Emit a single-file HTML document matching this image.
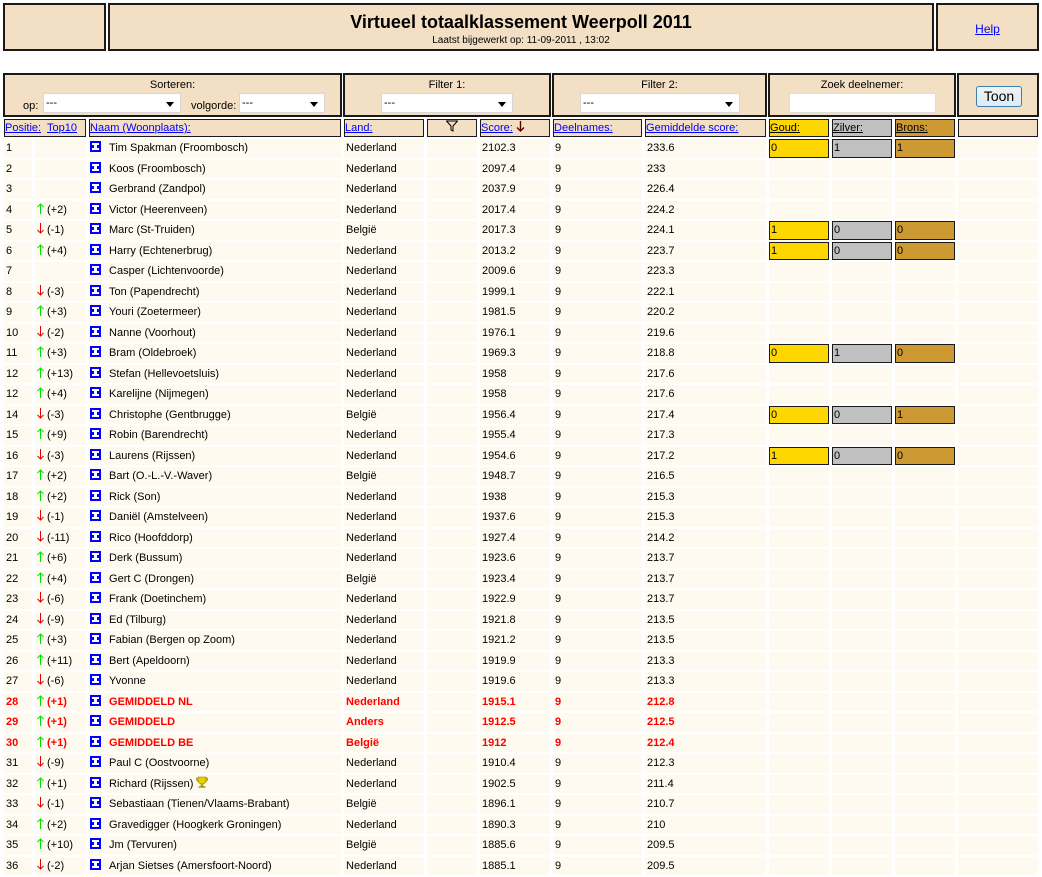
<!DOCTYPE html>
<html><head><meta charset="utf-8"><style>
body{margin:0;background:#fff;font-family:"Liberation Sans",Arial,sans-serif;font-size:11px;color:#000;width:1042px;height:876px;overflow:hidden;position:relative}
.box{position:absolute;background:#f3dfc4;border:2px solid #1a1a1a;box-sizing:border-box}
a{color:#00f;text-decoration:underline}
.sel{position:absolute;background:#fff;border:1px solid #d8d8d8;height:20px;box-sizing:border-box;font-size:11px;padding:3px 2px;text-align:left}
.sel:after{content:"";position:absolute;right:6px;top:8px;border-left:4px solid transparent;border-right:4px solid transparent;border-top:5px solid #000}
table{position:absolute;left:1px;top:117px;border-collapse:separate;border-spacing:3px 2px;table-layout:fixed;width:1040px}
td{height:16.5px;padding:0 0 0 1px;background:#fffaef;white-space:nowrap;overflow:hidden;vertical-align:middle;border:1px solid transparent;line-height:14px}
tr.h td{height:14px;background:#f3dfc4;border:1px solid #1a1a1a;padding:0}
td.g{background:#ffd700!important;border-color:#1a1a1a}
td.s{background:#c0c0c0!important;border-color:#1a1a1a}
td.b{background:#cc9933!important;border-color:#1a1a1a}
.ic{display:inline-block;width:11px;height:11px;vertical-align:-1px;margin:0 8px 0 -1px}
.ar{display:inline-block;width:7px;height:11px;vertical-align:-1px;margin-right:3px}
tr.r td{color:#f00;font-weight:bold}
</style></head><body>
<svg width="0" height="0" style="position:absolute"><defs>
<symbol id="I" viewBox="0 0 11 11"><rect width="11" height="11" fill="#00f"/><path fill="#fff" d="M2 2h7v2h-2v3h2v2h-7v-2h2v-3h-2z"/></symbol>
<symbol id="U" viewBox="0 0 7 11"><path d="M3.5 1V11M0.5 4L3.5 1L6.5 4" fill="none" stroke="#00e000" stroke-width="1"/></symbol>
<symbol id="D" viewBox="0 0 7 11"><path d="M3.5 0V10M0.5 7L3.5 10L6.5 7" fill="none" stroke="#e00000" stroke-width="1"/></symbol>
</defs></svg>
<div class="box" style="left:3px;top:3px;width:103px;height:48px"></div>
<div class="box" style="left:108px;top:3px;width:826px;height:48px;text-align:center">
<div style="font-size:18px;font-weight:bold;margin-top:7px">Virtueel totaalklassement Weerpoll 2011</div>
<div style="font-size:10px;margin-top:2px">Laatst bijgewerkt op: 11-09-2011 , 13:02</div></div>
<div class="box" style="left:936px;top:3px;width:103px;height:48px;text-align:center;padding-top:17px;font-size:12px"><a>Help</a></div>

<div class="box" style="left:3px;top:73px;width:339px;height:44px;text-align:center"><div style="margin-top:4px">Sorteren:</div>
<span style="position:absolute;left:18px;top:25px">op:</span><div class="sel" style="left:38px;top:18px;width:138px">---</div>
<span style="position:absolute;left:186px;top:25px">volgorde:</span><div class="sel" style="left:234px;top:18px;width:86px">---</div></div>
<div class="box" style="left:343px;top:73px;width:208px;height:44px;text-align:center"><div style="margin-top:4px">Filter 1:</div><div class="sel" style="left:36px;top:18px;width:132px">---</div></div>
<div class="box" style="left:552px;top:73px;width:215px;height:44px;text-align:center"><div style="margin-top:4px">Filter 2:</div><div class="sel" style="left:26px;top:18px;width:160px">---</div></div>
<div class="box" style="left:768px;top:73px;width:188px;height:44px;text-align:center"><div style="margin-top:4px">Zoek deelnemer:</div><div style="position:absolute;left:19px;top:18px;width:147px;height:20px;background:#fff;border:1px solid #ddd;box-sizing:border-box"></div></div>
<div class="box" style="left:957px;top:73px;width:82px;height:44px"><div style="position:absolute;left:17px;top:11px;width:46px;height:21px;border:1px solid #3c7fb1;border-radius:3px;background:linear-gradient(#f2f2f2,#dcecf7);font-size:14px;text-align:center;line-height:19px;box-sizing:border-box">Toon</div></div>

<table>
<colgroup><col style="width:28px"><col style="width:51px"><col style="width:252px"><col style="width:80px"><col style="width:50px"><col style="width:70px"><col style="width:89px"><col style="width:121px"><col style="width:60px"><col style="width:60px"><col style="width:60px"><col style="width:80px"></colgroup>
<tr class="h"><td colspan="2"><a>Positie:</a>&nbsp; <a>Top10</a></td><td><a>Naam (Woonplaats):</a></td><td><a>Land:</a></td><td style="text-align:center"><svg width="12" height="12" viewBox="0 0 12 12"><path d="M0.5 1H11.5L7 6V11L5 10V6Z" fill="none" stroke="#000"/></svg></td><td><a>Score:</a> <svg width="9" height="11" viewBox="0 0 9 11" style="vertical-align:-1px"><path d="M4.5 0V10M1 6.5L4.5 10L8 6.5" fill="none" stroke="#600" stroke-width="1.4"/></svg></td><td><a>Deelnames:</a></td><td><a>Gemiddelde score:</a></td><td class="g"><u>Goud:</u></td><td class="s"><u>Zilver:</u></td><td class="b"><u>Brons:</u></td><td></td></tr>
<tr><td>1</td><td></td><td><svg class="ic"><use href="#I"/></svg>Tim Spakman (Froombosch)</td><td>Nederland</td><td></td><td>2102.3</td><td>9</td><td>233.6</td><td class="g">0</td><td class="s">1</td><td class="b">1</td><td></td></tr>
<tr><td>2</td><td></td><td><svg class="ic"><use href="#I"/></svg>Koos (Froombosch)</td><td>Nederland</td><td></td><td>2097.4</td><td>9</td><td>233</td><td></td><td></td><td></td><td></td></tr>
<tr><td>3</td><td></td><td><svg class="ic"><use href="#I"/></svg>Gerbrand (Zandpol)</td><td>Nederland</td><td></td><td>2037.9</td><td>9</td><td>226.4</td><td></td><td></td><td></td><td></td></tr>
<tr><td>4</td><td><svg class="ar"><use href="#U"/></svg>(+2)</td><td><svg class="ic"><use href="#I"/></svg>Victor (Heerenveen)</td><td>Nederland</td><td></td><td>2017.4</td><td>9</td><td>224.2</td><td></td><td></td><td></td><td></td></tr>
<tr><td>5</td><td><svg class="ar"><use href="#D"/></svg>(-1)</td><td><svg class="ic"><use href="#I"/></svg>Marc (St-Truiden)</td><td>België</td><td></td><td>2017.3</td><td>9</td><td>224.1</td><td class="g">1</td><td class="s">0</td><td class="b">0</td><td></td></tr>
<tr><td>6</td><td><svg class="ar"><use href="#U"/></svg>(+4)</td><td><svg class="ic"><use href="#I"/></svg>Harry (Echtenerbrug)</td><td>Nederland</td><td></td><td>2013.2</td><td>9</td><td>223.7</td><td class="g">1</td><td class="s">0</td><td class="b">0</td><td></td></tr>
<tr><td>7</td><td></td><td><svg class="ic"><use href="#I"/></svg>Casper (Lichtenvoorde)</td><td>Nederland</td><td></td><td>2009.6</td><td>9</td><td>223.3</td><td></td><td></td><td></td><td></td></tr>
<tr><td>8</td><td><svg class="ar"><use href="#D"/></svg>(-3)</td><td><svg class="ic"><use href="#I"/></svg>Ton (Papendrecht)</td><td>Nederland</td><td></td><td>1999.1</td><td>9</td><td>222.1</td><td></td><td></td><td></td><td></td></tr>
<tr><td>9</td><td><svg class="ar"><use href="#U"/></svg>(+3)</td><td><svg class="ic"><use href="#I"/></svg>Youri (Zoetermeer)</td><td>Nederland</td><td></td><td>1981.5</td><td>9</td><td>220.2</td><td></td><td></td><td></td><td></td></tr>
<tr><td>10</td><td><svg class="ar"><use href="#D"/></svg>(-2)</td><td><svg class="ic"><use href="#I"/></svg>Nanne (Voorhout)</td><td>Nederland</td><td></td><td>1976.1</td><td>9</td><td>219.6</td><td></td><td></td><td></td><td></td></tr>
<tr><td>11</td><td><svg class="ar"><use href="#U"/></svg>(+3)</td><td><svg class="ic"><use href="#I"/></svg>Bram (Oldebroek)</td><td>Nederland</td><td></td><td>1969.3</td><td>9</td><td>218.8</td><td class="g">0</td><td class="s">1</td><td class="b">0</td><td></td></tr>
<tr><td>12</td><td><svg class="ar"><use href="#U"/></svg>(+13)</td><td><svg class="ic"><use href="#I"/></svg>Stefan (Hellevoetsluis)</td><td>Nederland</td><td></td><td>1958</td><td>9</td><td>217.6</td><td></td><td></td><td></td><td></td></tr>
<tr><td>12</td><td><svg class="ar"><use href="#U"/></svg>(+4)</td><td><svg class="ic"><use href="#I"/></svg>Karelijne (Nijmegen)</td><td>Nederland</td><td></td><td>1958</td><td>9</td><td>217.6</td><td></td><td></td><td></td><td></td></tr>
<tr><td>14</td><td><svg class="ar"><use href="#D"/></svg>(-3)</td><td><svg class="ic"><use href="#I"/></svg>Christophe (Gentbrugge)</td><td>België</td><td></td><td>1956.4</td><td>9</td><td>217.4</td><td class="g">0</td><td class="s">0</td><td class="b">1</td><td></td></tr>
<tr><td>15</td><td><svg class="ar"><use href="#U"/></svg>(+9)</td><td><svg class="ic"><use href="#I"/></svg>Robin (Barendrecht)</td><td>Nederland</td><td></td><td>1955.4</td><td>9</td><td>217.3</td><td></td><td></td><td></td><td></td></tr>
<tr><td>16</td><td><svg class="ar"><use href="#D"/></svg>(-3)</td><td><svg class="ic"><use href="#I"/></svg>Laurens (Rijssen)</td><td>Nederland</td><td></td><td>1954.6</td><td>9</td><td>217.2</td><td class="g">1</td><td class="s">0</td><td class="b">0</td><td></td></tr>
<tr><td>17</td><td><svg class="ar"><use href="#U"/></svg>(+2)</td><td><svg class="ic"><use href="#I"/></svg>Bart (O.-L.-V.-Waver)</td><td>België</td><td></td><td>1948.7</td><td>9</td><td>216.5</td><td></td><td></td><td></td><td></td></tr>
<tr><td>18</td><td><svg class="ar"><use href="#U"/></svg>(+2)</td><td><svg class="ic"><use href="#I"/></svg>Rick (Son)</td><td>Nederland</td><td></td><td>1938</td><td>9</td><td>215.3</td><td></td><td></td><td></td><td></td></tr>
<tr><td>19</td><td><svg class="ar"><use href="#D"/></svg>(-1)</td><td><svg class="ic"><use href="#I"/></svg>Daniël (Amstelveen)</td><td>Nederland</td><td></td><td>1937.6</td><td>9</td><td>215.3</td><td></td><td></td><td></td><td></td></tr>
<tr><td>20</td><td><svg class="ar"><use href="#D"/></svg>(-11)</td><td><svg class="ic"><use href="#I"/></svg>Rico (Hoofddorp)</td><td>Nederland</td><td></td><td>1927.4</td><td>9</td><td>214.2</td><td></td><td></td><td></td><td></td></tr>
<tr><td>21</td><td><svg class="ar"><use href="#U"/></svg>(+6)</td><td><svg class="ic"><use href="#I"/></svg>Derk (Bussum)</td><td>Nederland</td><td></td><td>1923.6</td><td>9</td><td>213.7</td><td></td><td></td><td></td><td></td></tr>
<tr><td>22</td><td><svg class="ar"><use href="#U"/></svg>(+4)</td><td><svg class="ic"><use href="#I"/></svg>Gert C (Drongen)</td><td>België</td><td></td><td>1923.4</td><td>9</td><td>213.7</td><td></td><td></td><td></td><td></td></tr>
<tr><td>23</td><td><svg class="ar"><use href="#D"/></svg>(-6)</td><td><svg class="ic"><use href="#I"/></svg>Frank (Doetinchem)</td><td>Nederland</td><td></td><td>1922.9</td><td>9</td><td>213.7</td><td></td><td></td><td></td><td></td></tr>
<tr><td>24</td><td><svg class="ar"><use href="#D"/></svg>(-9)</td><td><svg class="ic"><use href="#I"/></svg>Ed (Tilburg)</td><td>Nederland</td><td></td><td>1921.8</td><td>9</td><td>213.5</td><td></td><td></td><td></td><td></td></tr>
<tr><td>25</td><td><svg class="ar"><use href="#U"/></svg>(+3)</td><td><svg class="ic"><use href="#I"/></svg>Fabian (Bergen op Zoom)</td><td>Nederland</td><td></td><td>1921.2</td><td>9</td><td>213.5</td><td></td><td></td><td></td><td></td></tr>
<tr><td>26</td><td><svg class="ar"><use href="#U"/></svg>(+11)</td><td><svg class="ic"><use href="#I"/></svg>Bert (Apeldoorn)</td><td>Nederland</td><td></td><td>1919.9</td><td>9</td><td>213.3</td><td></td><td></td><td></td><td></td></tr>
<tr><td>27</td><td><svg class="ar"><use href="#D"/></svg>(-6)</td><td><svg class="ic"><use href="#I"/></svg>Yvonne</td><td>Nederland</td><td></td><td>1919.6</td><td>9</td><td>213.3</td><td></td><td></td><td></td><td></td></tr>
<tr class="r"><td>28</td><td><svg class="ar"><use href="#U"/></svg>(+1)</td><td><svg class="ic"><use href="#I"/></svg>GEMIDDELD NL</td><td>Nederland</td><td></td><td>1915.1</td><td>9</td><td>212.8</td><td></td><td></td><td></td><td></td></tr>
<tr class="r"><td>29</td><td><svg class="ar"><use href="#U"/></svg>(+1)</td><td><svg class="ic"><use href="#I"/></svg>GEMIDDELD</td><td>Anders</td><td></td><td>1912.5</td><td>9</td><td>212.5</td><td></td><td></td><td></td><td></td></tr>
<tr class="r"><td>30</td><td><svg class="ar"><use href="#U"/></svg>(+1)</td><td><svg class="ic"><use href="#I"/></svg>GEMIDDELD BE</td><td>België</td><td></td><td>1912</td><td>9</td><td>212.4</td><td></td><td></td><td></td><td></td></tr>
<tr><td>31</td><td><svg class="ar"><use href="#D"/></svg>(-9)</td><td><svg class="ic"><use href="#I"/></svg>Paul C (Oostvoorne)</td><td>Nederland</td><td></td><td>1910.4</td><td>9</td><td>212.3</td><td></td><td></td><td></td><td></td></tr>
<tr><td>32</td><td><svg class="ar"><use href="#U"/></svg>(+1)</td><td><svg class="ic"><use href="#I"/></svg>Richard (Rijssen) <svg width="12" height="12" viewBox="0 0 12 12" style="vertical-align:-1px"><path d="M2 1H10V4C10 7 8 8 6 8C4 8 2 7 2 4Z M2 2H0.5V3.5C0.5 5 2 5.5 2.5 5.5 M10 2H11.5V3.5C11.5 5 10 5.5 9.5 5.5 M5 8H7V10H5Z M3 10.5H9V11.5H3Z" fill="#e8d000" stroke="#8a7a00" stroke-width="0.6"/></svg></td><td>Nederland</td><td></td><td>1902.5</td><td>9</td><td>211.4</td><td></td><td></td><td></td><td></td></tr>
<tr><td>33</td><td><svg class="ar"><use href="#D"/></svg>(-1)</td><td><svg class="ic"><use href="#I"/></svg>Sebastiaan (Tienen/Vlaams-Brabant)</td><td>België</td><td></td><td>1896.1</td><td>9</td><td>210.7</td><td></td><td></td><td></td><td></td></tr>
<tr><td>34</td><td><svg class="ar"><use href="#U"/></svg>(+2)</td><td><svg class="ic"><use href="#I"/></svg>Gravedigger (Hoogkerk Groningen)</td><td>Nederland</td><td></td><td>1890.3</td><td>9</td><td>210</td><td></td><td></td><td></td><td></td></tr>
<tr><td>35</td><td><svg class="ar"><use href="#U"/></svg>(+10)</td><td><svg class="ic"><use href="#I"/></svg>Jm (Tervuren)</td><td>België</td><td></td><td>1885.6</td><td>9</td><td>209.5</td><td></td><td></td><td></td><td></td></tr>
<tr><td>36</td><td><svg class="ar"><use href="#D"/></svg>(-2)</td><td><svg class="ic"><use href="#I"/></svg>Arjan Sietses (Amersfoort-Noord)</td><td>Nederland</td><td></td><td>1885.1</td><td>9</td><td>209.5</td><td></td><td></td><td></td><td></td></tr>
</table>
</body></html>
